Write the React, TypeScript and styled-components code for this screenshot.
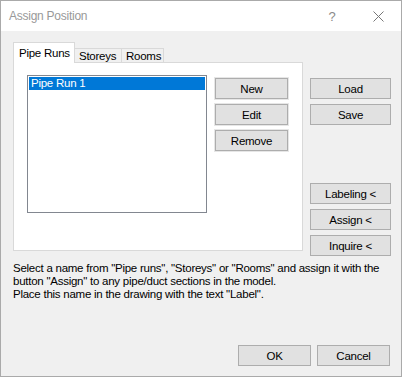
import { createGlobalStyle, styled } from "styled-components";

const GlobalStyle = createGlobalStyle`
  html, body {
    margin: 0;
    padding: 0;
    background: #ffffff;
  }
  body {
    font-family: "Liberation Sans", Arial, sans-serif;
    font-size: 11.5px;
    letter-spacing: -0.25px;
    color: #000;
  }
  * { box-sizing: border-box; }
`;

const Window = styled.div`
  width: 402px;
  height: 377px;
  border: 1px solid #aaaaaa;
  background: #f0f0f0;
  display: flex;
  flex-direction: column;
`;

const TitleBar = styled.div`
  height: 30px;
  background: #ffffff;
  display: flex;
  align-items: center;
  flex-shrink: 0;
`;

const Title = styled.div`
  flex: 1;
  padding-left: 8px;
  color: #999999;
  font-size: 12px;
  line-height: 16px;
`;

const CaptionButton = styled.div`
  width: 46px;
  height: 30px;
  display: flex;
  align-items: center;
  justify-content: center;
  color: #8a8a8a;
  font-size: 13px;
`;

const Body = styled.div`
  flex: 1;
  display: flex;
  flex-direction: column;
  padding: 11px 10px 10px 12px;
`;

const MainRow = styled.div`
  display: flex;
  gap: 7px;
`;

const TabControl = styled.div`
  width: 290px;
  display: flex;
  flex-direction: column;
`;

const TabStrip = styled.div`
  display: flex;
  align-items: flex-end;
  height: 20px;
  position: relative;
  z-index: 1;
`;

const Tab = styled.div<{ $active?: boolean; $w: number }>`
  width: ${({ $w }) => $w}px;
  height: ${({ $active }) => ($active ? "21px" : "14px")};
  margin-bottom: ${({ $active }) => ($active ? "-1px" : "0")};
  border: 1px solid #d9d9d9;
  border-bottom: none;
  border-left-width: ${({ $active }) => ($active ? "1px" : "0")};
  background: ${({ $active }) => ($active ? "#ffffff" : "#f0f0f0")};
  padding-left: ${({ $active }) => ($active ? "5px" : "4px")};
  padding-top: ${({ $active }) => ($active ? "4px" : "1px")};
  line-height: 13px;
  white-space: nowrap;
`;

const Panel = styled.div`
  height: 189px;
  background: #ffffff;
  border: 1px solid #d9d9d9;
  display: flex;
  align-items: flex-start;
  padding: 12px 0 0 13px;
`;

const ListBox = styled.div`
  width: 180px;
  height: 138px;
  border: 1px solid #828790;
  padding: 1px;
  background: #fff;
`;

const ListItem = styled.div<{ $selected?: boolean }>`
  height: 13px;
  line-height: 13px;
  padding-left: 2px;
  background: ${({ $selected }) => ($selected ? "#0078d7" : "transparent")};
  color: ${({ $selected }) => ($selected ? "#ffffff" : "#000")};
  white-space: nowrap;
`;

const ButtonColumn = styled.div<{ $inset?: boolean }>`
  display: flex;
  flex-direction: column;
  gap: 5px;
  margin-left: ${({ $inset }) => ($inset ? "8px" : "0")};
  padding-top: ${({ $inset }) => ($inset ? "3px" : "36px")};
`;

const Button = styled.div<{ $w: number; $onWhite?: boolean }>`
  width: ${({ $w }) => $w}px;
  height: 21px;
  border: 1px solid #adadad;
  background: #e1e1e1;
  box-shadow: ${({ $onWhite }) => ($onWhite ? "0 0 0 1px #e6e6e6" : "none")};
  display: flex;
  align-items: center;
  justify-content: center;
  line-height: 14px;
  white-space: nowrap;
`;

const Spacer = styled.div`
  height: 48px;
`;

const Description = styled.p`
  margin: 6px 0 0;
  line-height: 13px;
  white-space: nowrap;
`;

const Footer = styled.div`
  margin-top: auto;
  display: flex;
  justify-content: flex-end;
  gap: 6px;
  padding-right: 1px;
`;

export default function App() {
  return (
    <>
      <GlobalStyle />
      <Window>
        <TitleBar>
          <Title>Assign Position</Title>
          <CaptionButton>?</CaptionButton>
          <CaptionButton>
            <svg width="11" height="11" viewBox="0 0 11 11">
              <path d="M0.5 0.5 L10.5 10.5 M10.5 0.5 L0.5 10.5" stroke="#777" strokeWidth="1" />
            </svg>
          </CaptionButton>
        </TitleBar>
        <Body>
          <MainRow>
            <TabControl>
              <TabStrip>
                <Tab $active $w={62}>Pipe Runs</Tab>
                <Tab $w={47}>Storeys</Tab>
                <Tab $w={42}>Rooms</Tab>
              </TabStrip>
              <Panel>
                <ListBox>
                  <ListItem $selected>Pipe Run 1</ListItem>
                </ListBox>
                <ButtonColumn $inset>
                  <Button $w={73} $onWhite>New</Button>
                  <Button $w={73} $onWhite>Edit</Button>
                  <Button $w={73} $onWhite>Remove</Button>
                </ButtonColumn>
              </Panel>
            </TabControl>
            <ButtonColumn>
              <Button $w={81}>Load</Button>
              <Button $w={81}>Save</Button>
              <Spacer />
              <Button $w={81}>Labeling &lt;</Button>
              <Button $w={81}>Assign &lt;</Button>
              <Button $w={81}>Inquire &lt;</Button>
            </ButtonColumn>
          </MainRow>
          <Description>
            Select a name from "Pipe runs", "Storeys" or "Rooms" and assign it with the
            <br />
            button "Assign" to any pipe/duct sections in the model.
            <br />
            Place this name in the drawing with the text "Label".
          </Description>
          <Footer>
            <Button $w={73}>OK</Button>
            <Button $w={73}>Cancel</Button>
          </Footer>
        </Body>
      </Window>
    </>
  );
}
